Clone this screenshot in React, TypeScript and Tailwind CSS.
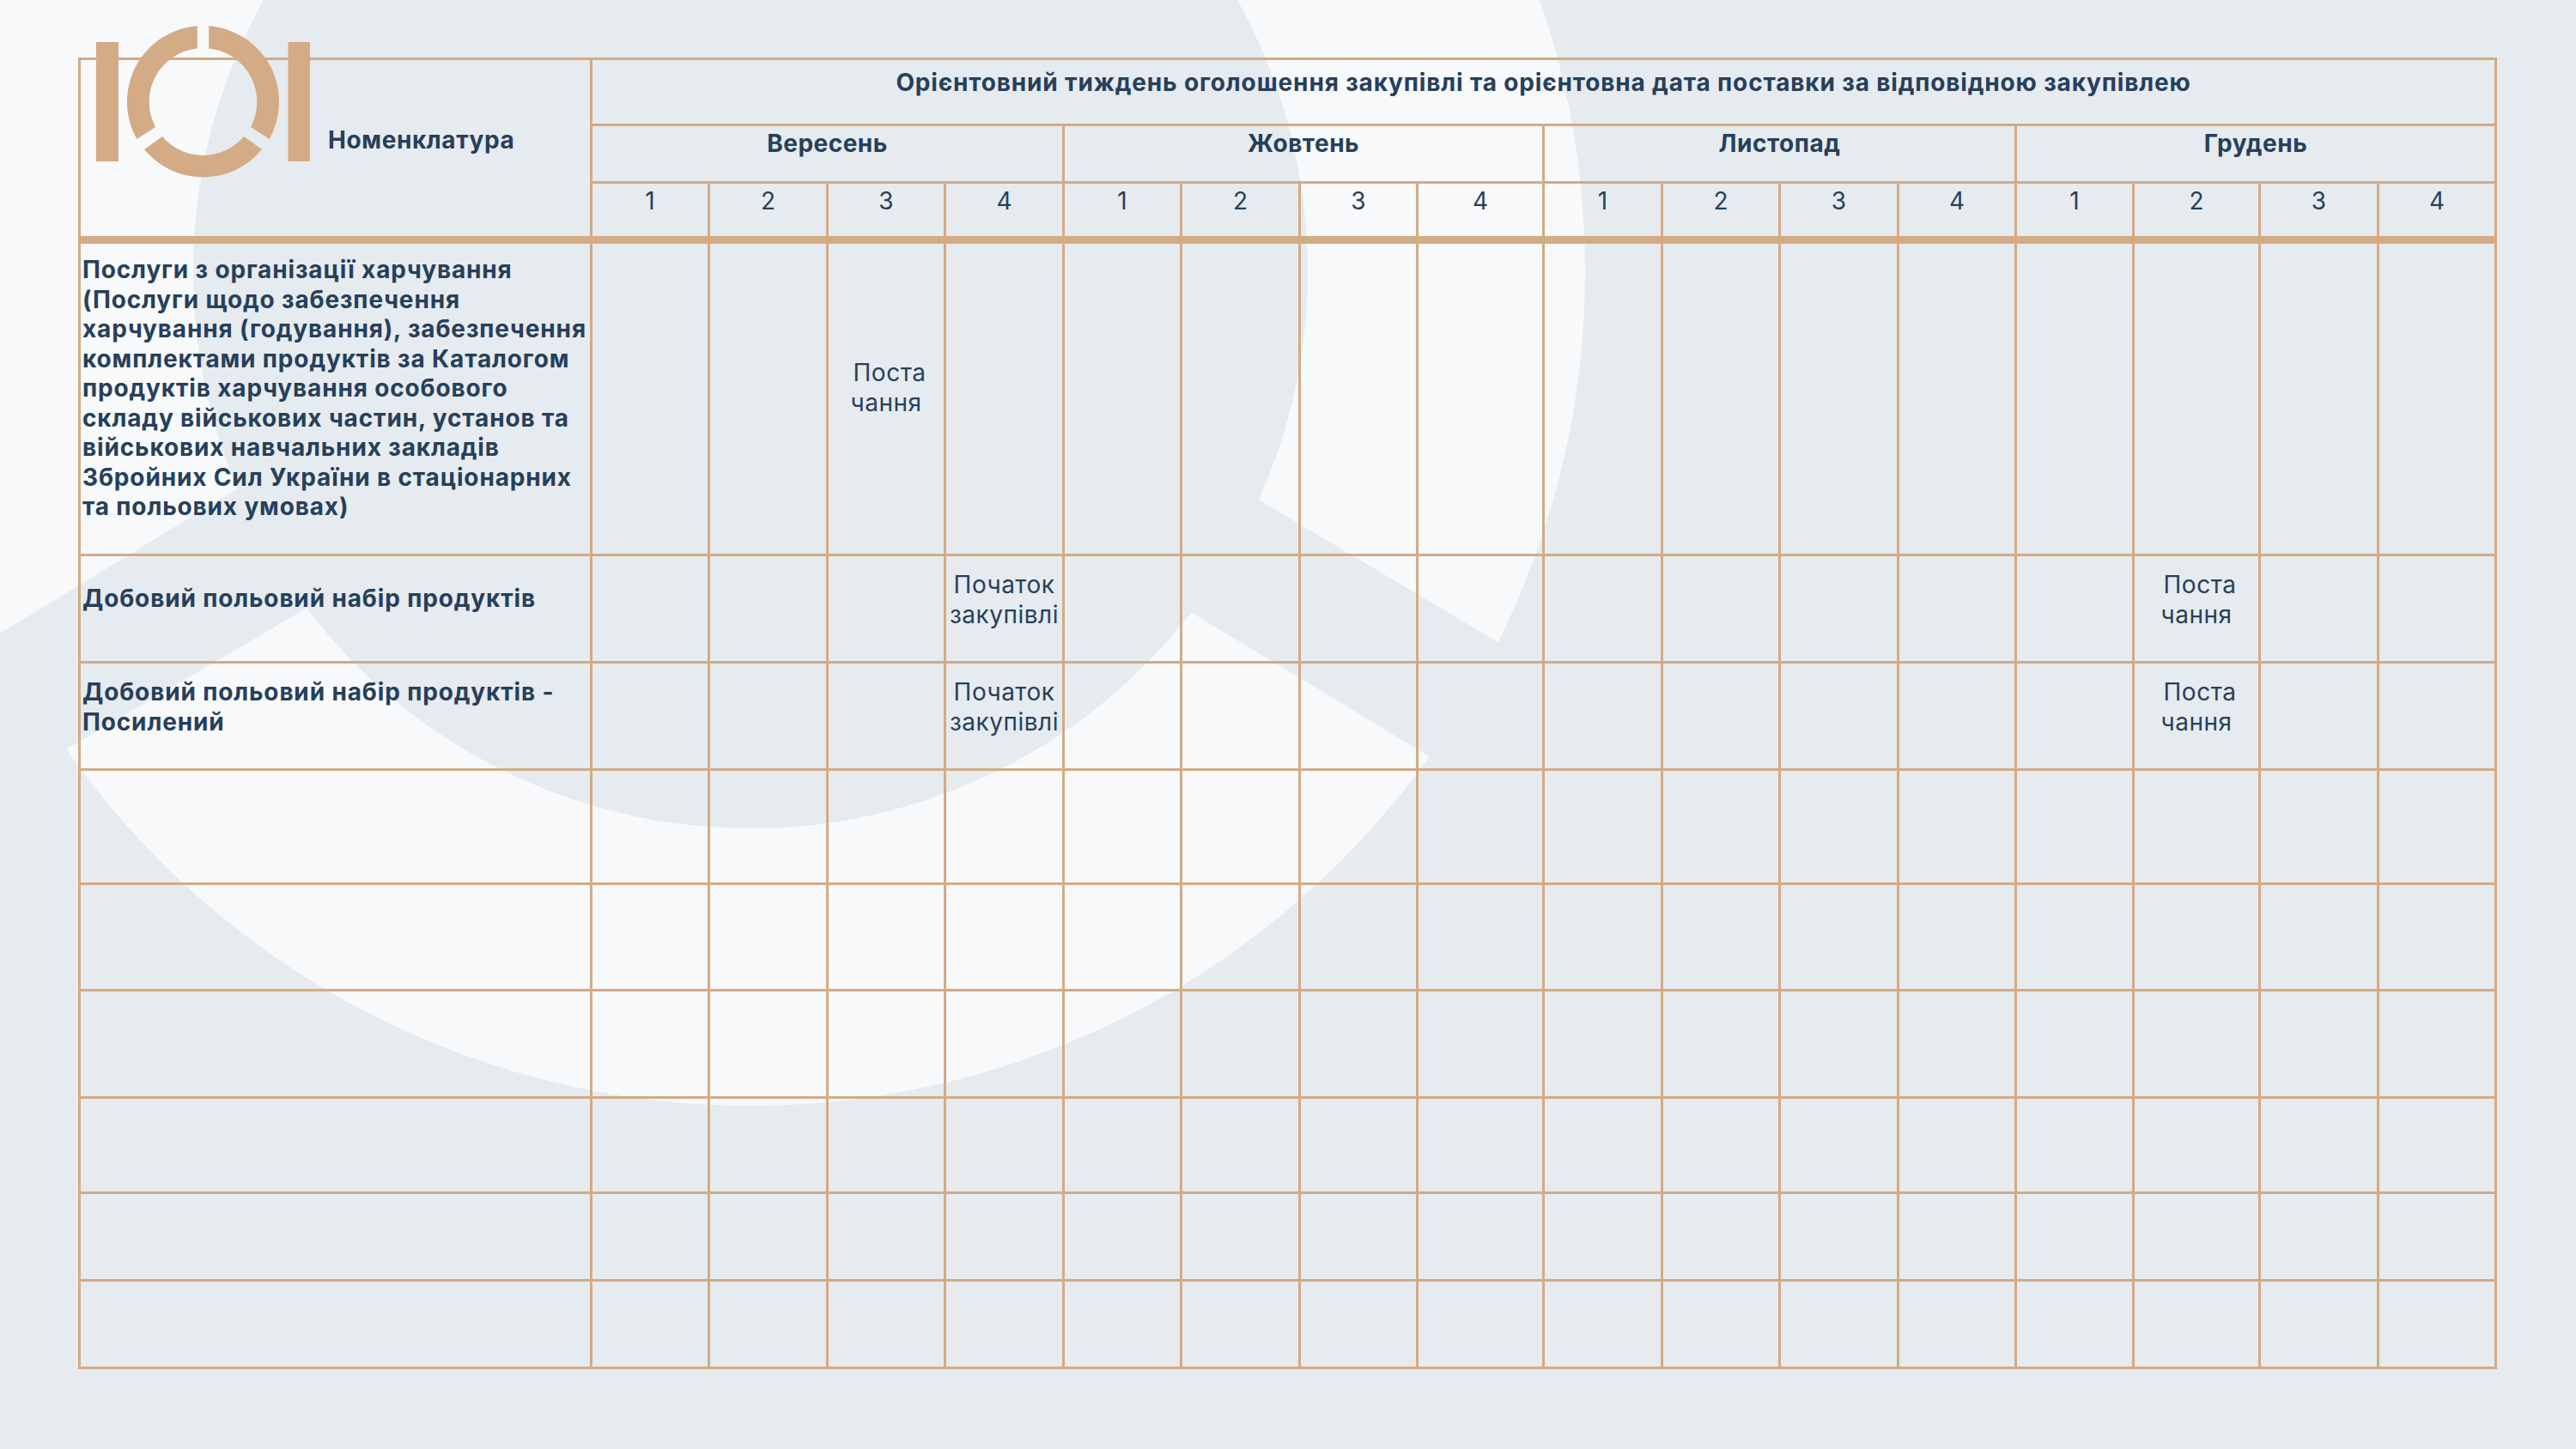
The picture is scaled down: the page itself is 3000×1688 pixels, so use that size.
const bodyFont = 'font-["Inter",sans-serif]';

const colWidths = '596px 137px 138px 137px 138px 137px 138px 137px 147px 138px 137px 138px 137px 137px 147px 138px 137px';
const rowHeights = [364, 125, 125, 133, 124, 125, 111, 102, 102];
const months = ['Вересень', 'Жовтень', 'Листопад', 'Грудень'];
const weeks = [1, 2, 3, 4, 1, 2, 3, 4, 1, 2, 3, 4, 1, 2, 3, 4];

type Row = { name?: string[]; pad?: string; marks?: Record<number, string[]>; markPad?: string };

const rows: Row[] = [
  {
    name: [
      'Послуги з організації харчування',
      '(Послуги щодо забезпечення',
      'харчування (годування), забезпечення',
      'комплектами продуктів за Каталогом',
      'продуктів харчування особового',
      'складу військових частин, установ та',
      'військових навчальних закладів',
      'Збройних Сил України в стаціонарних',
      'та польових умовах)',
    ],
    pad: 'pt-[13px]',
    marks: { 2: ['Поста', 'чання'] },
    markPad: 'pt-[133px]',
  },
  {
    name: ['Добовий польовий набір продуктів'],
    pad: 'pt-[32px]',
    marks: { 3: ['Початок', 'закупівлі'], 13: ['Поста', 'чання'] },
    markPad: 'pt-[16px]',
  },
  {
    name: ['Добовий польовий набір продуктів -', 'Посилений'],
    pad: 'pt-[16px]',
    marks: { 3: ['Початок', 'закупівлі'], 13: ['Поста', 'чання'] },
    markPad: 'pt-[16px]',
  },
  {},
  {},
  {},
  {},
  {},
  {},
];

function Background() {
  return (
    <svg className="absolute inset-0" width="3000" height="1688" viewBox="0 0 3000 1688">
      <circle cx="874" cy="316" r="810.5" fill="none" stroke="#f7f9fb" strokeWidth="323" />
      <polygon points="1380,531 1830,799 1750,933 1301,661" fill="#e6ebef" />
      <polygon points="400,494 -90,793 -10,924 460,648" fill="#e6ebef" />
    </svg>
  );
}

function Logo() {
  return (
    <svg className="absolute left-0 top-0" width="400" height="220" viewBox="0 0 400 220" fill="#d3ab85">
      <rect x="112" y="49" width="26" height="139" />
      <rect x="335.5" y="49" width="25.5" height="139" />
      <path d="M243.2 30.25A88.5 88.5 0 0 1 313.6 162L292 148A62.5 62.5 0 0 0 243.2 56.4Z" />
      <path d="M229.8 30.25A88.5 88.5 0 0 0 159.4 162L181 148A62.5 62.5 0 0 1 229.8 56.4Z" />
      <path d="M305 174A88.5 88.5 0 0 1 168 174L189 159A62.5 62.5 0 0 0 284 159Z" />
    </svg>
  );
}

export default function App() {
  return (
    <div className={`relative w-[3000px] h-[1688px] overflow-hidden bg-[#e6ebef] text-[#26405a] ${bodyFont}`}>
      <Background />
      <div className="relative pl-[91px] pt-[67px]">
        <div
          className="grid w-fit border-l-[3px] border-t-[3px] border-[#d3ab85] text-[28px] leading-[34.5px]"
          style={{
            gridTemplateColumns: colWidths,
            gridTemplateRows: ['77px', '67px', '70px', ...rowHeights.map((h) => `${h}px`)].join(' '),
          }}
        >
          <div className="row-span-3 border-r-[3px] border-b-[9px] border-[#d3ab85] pl-[288px] pt-[76px] font-bold tracking-[0.6px]">
            Номенклатура
          </div>
          <div className="col-span-16 border-r-[3px] border-b-[3px] border-[#d3ab85] pt-[9px] text-center font-bold tracking-[0.85px]">
            Орієнтовний тиждень оголошення закупівлі та орієнтовна дата поставки за відповідною закупівлею
          </div>
          {months.map((m) => (
            <div key={m} className="col-span-4 border-r-[3px] border-b-[3px] border-[#d3ab85] pt-[3px] text-center font-bold tracking-[0.5px]">
              {m}
            </div>
          ))}
          {weeks.map((w, i) => (
            <div key={i} className="border-r-[3px] border-b-[9px] border-[#d3ab85] pt-[3px] text-center">
              {w}
            </div>
          ))}

          {rows.map((row, r) => (
            <div key={r} className="contents">
              <div className={`whitespace-nowrap border-r-[3px] border-b-[3px] border-[#d3ab85] pl-[2px] font-bold tracking-[0.85px] ${row.pad ?? ''}`}>
                {row.name?.map((line) => (
                  <div key={line}>{line}</div>
                ))}
              </div>
              {weeks.map((_, c) => (
                <div key={c} className={`border-r-[3px] border-b-[3px] border-[#d3ab85] text-center tracking-[0.5px] ${row.markPad ?? ''}`}>
                  {row.marks?.[c]?.map((line) => (
                    <div key={line} className={line === 'Поста' ? 'pl-[8px]' : ''}>
                      {line}
                    </div>
                  ))}
                </div>
              ))}
            </div>
          ))}
        </div>
      </div>
      <Logo />
    </div>
  );
}
